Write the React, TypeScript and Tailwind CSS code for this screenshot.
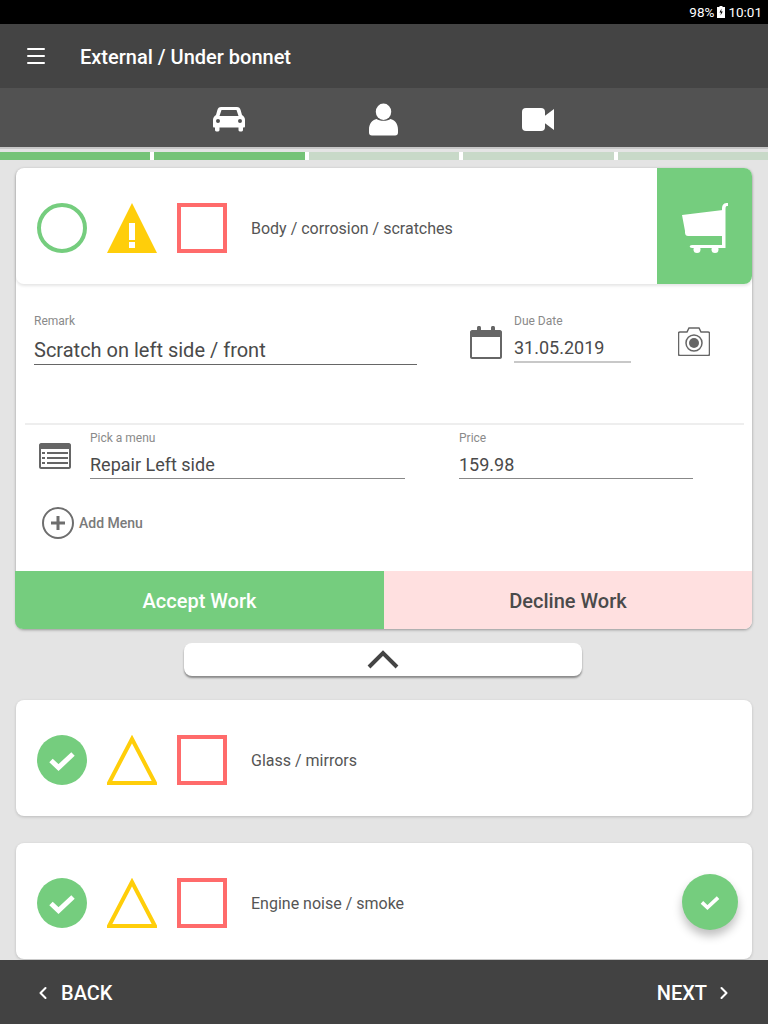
import React from 'react';
import { ChevronLeft, ChevronRight, Menu } from 'lucide-react';

const roboto = { fontFamily: 'Roboto, sans-serif' };

function Check({ size = 30 }: { size?: number }) {
  return (
    <svg width={size} height={size} viewBox="0 0 30 30" fill="none">
      <path d="M4 15.5 L11.5 22.5 L26 9" stroke="#fff" strokeWidth="5" />
    </svg>
  );
}

function StatusIcons({ state }: { state: 'open' | 'ok' }) {
  return (
    <div className="flex items-center gap-5 mt-1">
      {state === 'ok' ? (
        <div className="w-[50px] h-[50px] rounded-full bg-[#75cd7e] flex items-center justify-center">
          <Check />
        </div>
      ) : (
        <div className="w-[50px] h-[50px] rounded-full border-4 border-[#75cd7e]" />
      )}
      <svg width="50" height="50" viewBox="0 0 50 50">
        {state === 'open' ? (
          <>
            <path d="M25 0 L50 50 L0 50 Z" fill="#ffce0a" />
            <rect x="22" y="20" width="6" height="17" fill="#fff" />
            <rect x="22" y="39" width="6" height="6" fill="#fff" />
          </>
        ) : (
          <path d="M25 4 L48 48 L2 48 Z" fill="none" stroke="#ffce0a" strokeWidth="4" />
        )}
      </svg>
      <div className="w-[50px] h-[50px] border-4 border-[#ff6b6b]" />
    </div>
  );
}

function Field({ label, value, className, valueClass }: { label: string; value: string; className: string; valueClass: string }) {
  return (
    <div className={className}>
      <div className="text-[12px] leading-[14px] text-[#8a8a8a]">{label}</div>
      <div className={`text-[#4a4a4a] ${valueClass}`}>{value}</div>
    </div>
  );
}

function CheckRow({ title }: { title: string }) {
  return (
    <div className="h-[116px] bg-white rounded-lg shadow-[0_1px_3px_rgba(0,0,0,0.18)] flex items-center pl-[21px] shrink-0">
      <StatusIcons state="ok" />
      <span className="ml-6 mt-[6px] text-[16px] text-[#555]">{title}</span>
    </div>
  );
}

export default function App() {
  return (
    <div className="relative w-[768px] h-[1024px] overflow-hidden flex flex-col bg-[#e4e4e4]" style={roboto}>
      <div className="h-6 bg-black text-white text-[13.500px] flex items-center justify-end pr-[6px] gap-[3px] shrink-0">
        <span>98%</span>
        <svg width="8" height="12" viewBox="0 0 8 12">
          <path d="M2.500 0h3v1H8v11H0V1h2.500z" fill="#fff" />
          <path d="M4.500 2.500 L2.500 6.500h1.500L3.500 9.500 5.800 5.500H4.200z" fill="#000" />
        </svg>
        <span>10:01</span>
      </div>

      <header className="h-16 bg-[#444] flex items-center text-white shrink-0">
        <Menu className="ml-[24px] w-6 h-6" strokeWidth={2} />
        <span className="ml-8 mt-[2px] text-[20px] font-medium">External / Under bonnet</span>
      </header>

      <nav className="h-[61px] bg-[#525252] border-b-2 border-[#c8c8c8] flex items-center text-white shrink-0 pt-1">
        <div className="ml-[213px] flex items-center gap-[124px]">
          <svg width="32" height="25" viewBox="0 0 32 25" fill="#fff">
            <path fillRule="evenodd" d="M8 0H24C26 0 27 1 27.600 3L29 8C31 9 32 11 32 13V19C32 20 31.500 20.500 31 20.500H30V23C30 25 25.500 25 25.500 23V20.500H6.500V23C6.500 25 2 25 2 23V20.500H1C.5 20.500 0 20 0 19V13C0 11 1 9 3 8L4.400 3C5 1 6 0 8 0ZM8.500 3L6.500 9H25.500L23.500 3ZM3 14a2 2 0 1 0 4 0a2 2 0 1 0-4 0ZM25 14a2 2 0 1 0 4 0a2 2 0 1 0-4 0Z" />
          </svg>
          <svg width="29" height="33" viewBox="0 0 30 33" fill="#fff">
            <ellipse cx="15" cy="8.500" rx="8" ry="8.500" />
            <path d="M8 16c2 2.500 12 2.500 14 0 5 1 8 5 8 11v3c0 2-1 3-3 3H3c-2 0-3-1-3-3v-3c0-6 3-10 8-11z" />
          </svg>
          <svg width="32" height="23" viewBox="0 0 32 23" fill="#fff">
            <rect width="23" height="23" rx="4" />
            <path d="M22 8.500 L32 1 V22 L22 14.500Z" />
          </svg>
        </div>
      </nav>

      <div className="flex gap-1 mt-[3px] h-2 bg-white shrink-0">
        <div className="flex-1 bg-[#75c377]" />
        <div className="flex-1 bg-[#75c377]" />
        <div className="flex-1 bg-[#c8d9c8]" />
        <div className="flex-1 bg-[#c8d9c8]" />
        <div className="flex-1 bg-[#c8d9c8]" />
      </div>

      <main className="flex-1 min-h-0 overflow-hidden px-4 pt-2 flex flex-col">
        <section className="bg-white rounded-lg shadow-[0_1px_3px_rgba(0,0,0,0.35)] shrink-0">
          <div className="h-[116px] rounded-lg shadow-[0_2px_3px_rgba(0,0,0,0.1)] flex items-center pl-[21px] overflow-hidden">
            <StatusIcons state="open" />
            <span className="ml-6 mt-[6px] text-[16px] text-[#555]">Body / corrosion / scratches</span>
            <div className="ml-auto w-[95px] h-full bg-[#75cd7e] flex items-center pl-[25px]">
              <svg className="mt-1" width="46" height="50" viewBox="0 0 46 50" fill="#fff">
                <path d="M0 12 L41 7 V33 H6 C3 33 3 30 3 28 Z" />
                <path d="M40 6 C40 1 42 0 46 0 V3 C44 3 43.500 3.500 43.500 6 V45 H10 C7 45 7 42 10 42 H40 Z" />
                <circle cx="15" cy="46.500" r="3.500" />
                <circle cx="33" cy="46.500" r="3.500" />
              </svg>
            </div>
          </div>

          <div className="h-[139px] flex pl-[18px] pt-[30px]">
            <Field label="Remark" value="Scratch on left side / front" className="w-[383px]" valueClass="text-[20px] leading-[28px] mt-[8px] border-b border-[#666]" />
            <svg className="ml-[53px] mt-[12px]" width="32" height="33" viewBox="0 0 32 33" fill="#666">
              <path fillRule="evenodd" d="M2 4h5V2c0-3 4-3 4 0v2h10V2c0-3 4-3 4 0v2h5c1 0 2 1 2 2v25c0 1-1 2-2 2H2c-1 0-2-1-2-2V6c0-1 1-2 2-2zM2 11v20h28V11z" />
            </svg>
            <Field label="Due Date" value="31.05.2019" className="ml-[12px] w-[117px]" valueClass="text-[18px] leading-[26px] mt-[7px] border-b-2 border-[#c8c8c8]" />
            <svg className="ml-[47px] mt-[13px]" width="32" height="29" viewBox="0 0 32 29" fill="none" stroke="#666" strokeWidth="1.500">
              <path d="M2 5h7l2-4h10l2 4h7c1 0 1.500.5 1.500 1.500V27c0 1-.5 1.500-1.500 1.500H2C1 28.500.5 28 .5 27V6.500C.5 5.500 1 5 2 5z" />
              <circle cx="16" cy="16" r="8" />
              <circle cx="16" cy="16" r="5" fill="#666" stroke="none" />
            </svg>
          </div>

          <div className="ml-[9px] mr-[8px] h-[2px] bg-[#eeeeee]" />

          <div className="flex h-[59px] pt-[6px]">
            <svg className="ml-[23px] mt-[12px]" width="32" height="26" viewBox="0 0 32 26" fill="#666">
              <path fillRule="evenodd" d="M2 0h28c1 0 2 1 2 2v22c0 1-1 2-2 2H2c-1 0-2-1-2-2V2c0-1 1-1.900 2-2zM2 6v18h28V6z" />
              <rect x="3" y="9" width="3" height="2" /><rect x="8" y="9" width="21" height="2" />
              <rect x="3" y="14" width="3" height="2" /><rect x="8" y="14" width="21" height="2" />
              <rect x="3" y="19" width="3" height="2" /><rect x="8" y="19" width="21" height="2" />
            </svg>
            <Field label="Pick a menu" value="Repair Left side" className="ml-[19px] w-[315px]" valueClass="text-[18px] leading-[26px] mt-[7px] border-b border-[#888]" />
            <Field label="Price" value="159.98" className="ml-[54px] w-[234px]" valueClass="text-[18px] leading-[26px] mt-[7px] border-b border-[#888]" />
          </div>

          <div className="h-[87px] pl-[26px] pt-[23px]">
            <div className="flex items-center gap-[5px]">
              <div className="w-8 h-8 rounded-full border-2 border-[#6e6e6e] flex items-center justify-center">
                <svg width="16" height="16" viewBox="0 0 16 16"><path d="M8 1v14M1 8h14" stroke="#6e6e6e" strokeWidth="3" /></svg>
              </div>
              <span className="text-[14px] font-medium text-[#7a7a7a]">Add Menu</span>
            </div>
          </div>

          <div className="flex h-[58px] -ml-px rounded-b-lg overflow-hidden text-[20px] font-medium">
            <button className="w-[369px] pt-[2px] bg-[#75cd7e] text-white">Accept Work</button>
            <button className="flex-1 pt-[2px] bg-[#ffe0e0] text-[#4a4a4a]">Decline Work</button>
          </div>
        </section>

        <button className="mt-[14px] ml-[168px] mr-[170px] h-[33px] shrink-0 bg-white rounded-lg shadow-[0_2px_2px_rgba(0,0,0,0.4)] flex items-center justify-center">
          <svg width="32" height="19" viewBox="0 0 32 19" fill="none">
            <path d="M2 17 L16 3 L30 17" stroke="#444" strokeWidth="4" />
          </svg>
        </button>

        <div className="mt-6 flex flex-col gap-[27px]">
          <CheckRow title="Glass / mirrors" />
          <CheckRow title="Engine noise / smoke" />
        </div>
      </main>

      <button className="absolute left-[682px] top-[874px] w-14 h-14 rounded-full bg-[#75cd7e] shadow-[0_6px_10px_rgba(0,0,0,0.25)] flex items-center justify-center">
        <Check size={22} />
      </button>

      <footer className="h-16 bg-[#424242] text-white text-[20px] font-medium flex items-center justify-between pl-[33px] pr-[34px] pt-[2px] shrink-0">
        <div className="flex items-center gap-2">
          <ChevronLeft className="w-5 h-5" strokeWidth={2.500} />
          <span>BACK</span>
        </div>
        <div className="flex items-center gap-[7px]">
          <span>NEXT</span>
          <ChevronRight className="w-5 h-5" strokeWidth={2.500} />
        </div>
      </footer>
    </div>
  );
}
